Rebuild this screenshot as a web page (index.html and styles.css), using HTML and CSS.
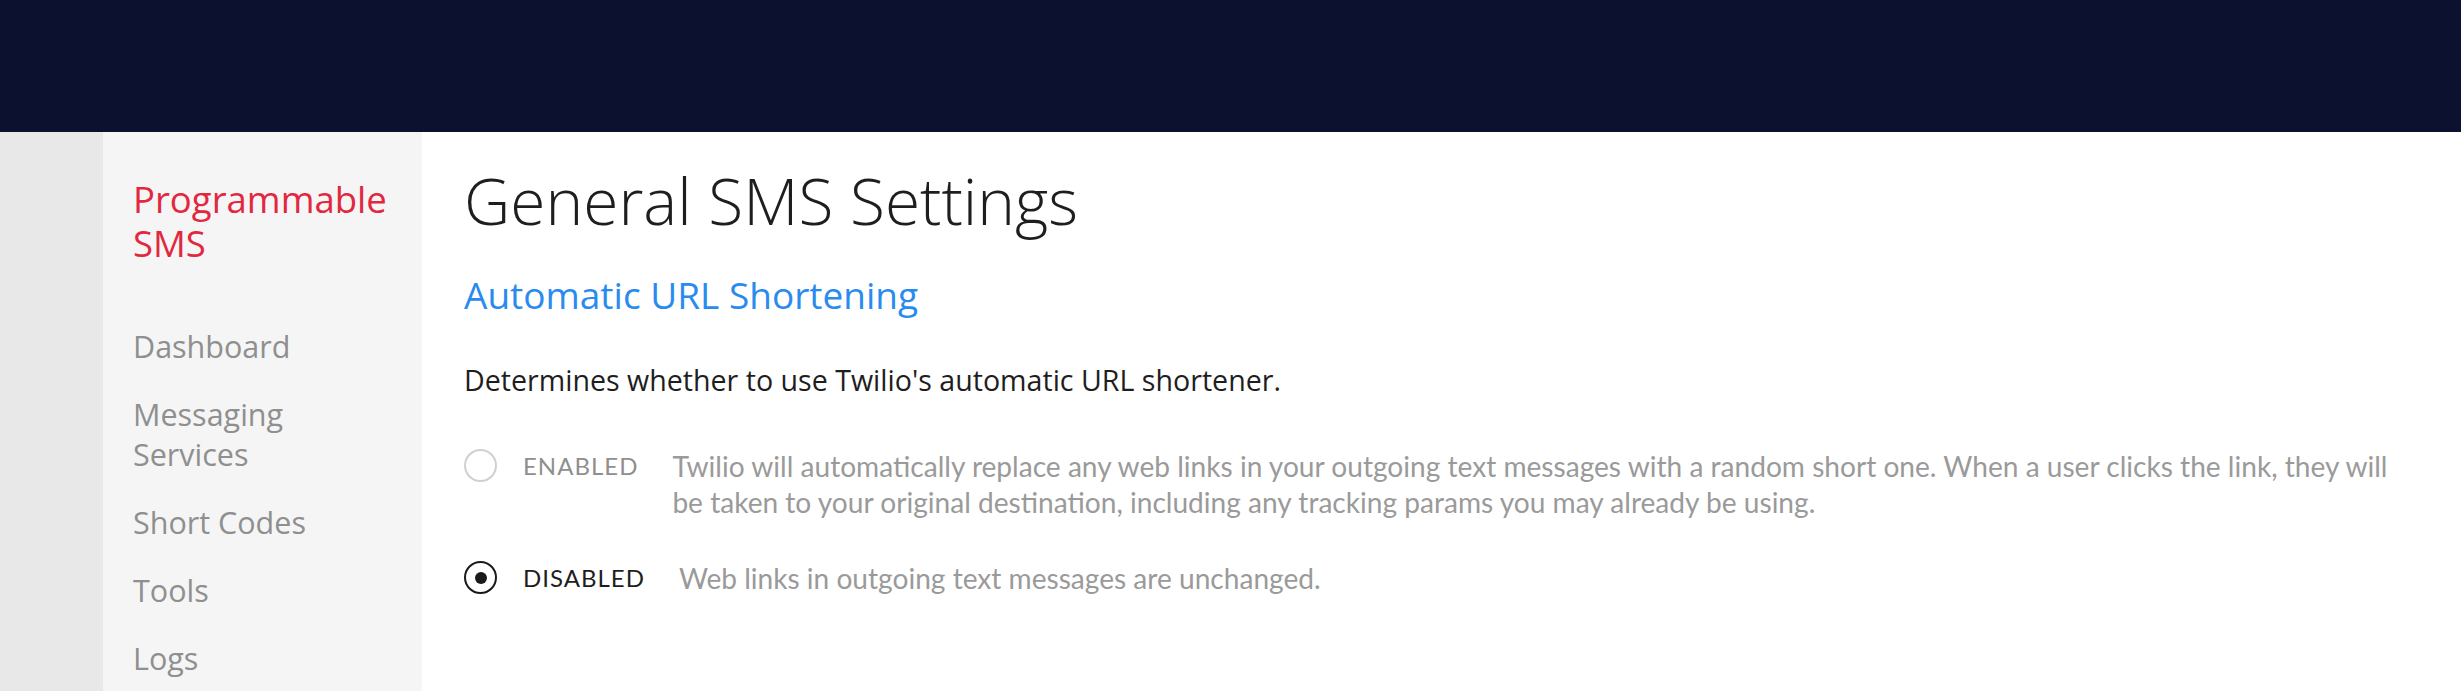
FILE: index.html
```html
<!DOCTYPE html>
<html lang="en">
<head>
    <meta charset="UTF-8">
    <meta name="viewport" content="width=device-width, initial-scale=1.0">
    <title>General SMS Settings</title>
    <link rel="stylesheet" href="styles.css">
</head>
<body>

<div class="topbar"></div>

<div class="page">
    <div class="rail"></div>

    <div class="sidebar">
        <div class="product">Programmable SMS</div>
        <ul class="nav">
            <li>Dashboard</li>
            <li>Messaging Services</li>
            <li>Short Codes</li>
            <li>Tools</li>
            <li>Logs</li>
        </ul>
    </div>

    <div class="main">
        <h1>General SMS Settings</h1>
        <h2>Automatic URL Shortening</h2>
        <p class="intro">Determines whether to use Twilio's automatic URL shortener.</p>

        <div class="option">
            <span class="radio"></span>
            <span class="option-name">ENABLED</span>
            <span class="option-text">Twilio will automatically replace any web links in your outgoing text messages with a random short one. When a user clicks the link, they will be taken to your original destination, including any tracking params you may already be using.</span>
        </div>

        <div class="option checked">
            <span class="radio"></span>
            <span class="option-name">DISABLED</span>
            <span class="option-text">Web links in outgoing text messages are unchanged.</span>
        </div>
    </div>
</div>

</body>
</html>
```

FILE: styles.css
```css
body {
    font-family: "Open Sans", sans-serif;
    margin: 0;
    padding: 0;
    height: 691px;
    overflow: hidden;
    background-color: #fff;
    display: flex;
    flex-direction: column;
}

.topbar {
    height: 132px;
    background-color: #0d1130;
    flex-shrink: 0;
}

.page {
    display: flex;
    flex: 1;
}

.rail {
    width: 103px;
    background-color: #e8e8e8;
}

.sidebar {
    width: 289px;
    padding: 45px 0 0 30px;
    background-color: #f5f5f5;
}

.product {
    color: #e2283f;
    font-size: 36.5px;
    line-height: 44px;
}

.nav {
    list-style: none;
    margin: 61px 0 0;
    padding: 0;
}

.nav li {
    color: #8f8f8f;
    font-size: 30.5px;
    line-height: 40px;
    margin-bottom: 28px;
    width: 190px;
}

.main {
    flex: 1;
    padding: 31px 48px 0 42px;
}

h1 {
    margin: 0;
    color: #1e1e1e;
    font-size: 64px;
    font-weight: 300;
    line-height: 76px;
}

h2 {
    margin: 33px 0 0;
    color: #2a8bef;
    font-size: 37px;
    font-weight: 400;
    line-height: 46px;
}

.intro {
    margin: 44px 0 0;
    color: #1e1e1e;
    font-size: 28.6px;
    line-height: 36px;
}

.option {
    display: flex;
    align-items: flex-start;
    margin-top: 50px;
    font-family: Lato, sans-serif;
    line-height: 36px;
}

.option + .option {
    margin-top: 40px;
}

.radio {
    flex-shrink: 0;
    width: 29px;
    height: 29px;
    margin-top: 1px;
    border: 2px solid #d0d0d0;
    border-radius: 50%;
    display: flex;
    justify-content: center;
    align-items: center;
}

.option-name {
    flex-shrink: 0;
    margin-left: 26px;
    color: #8f8f8f;
    font-size: 24px;
    letter-spacing: 1px;
}

.option-text {
    margin-left: 34px;
    color: #9a9a9a;
    font-size: 28.1px;
}

.checked .radio {
    border-color: #1a1a1a;
}

.checked .radio::after {
    content: "";
    width: 12px;
    height: 12px;
    border-radius: 50%;
    background-color: #1a1a1a;
}

.checked .option-name {
    color: #1e1e1e;
}
```
